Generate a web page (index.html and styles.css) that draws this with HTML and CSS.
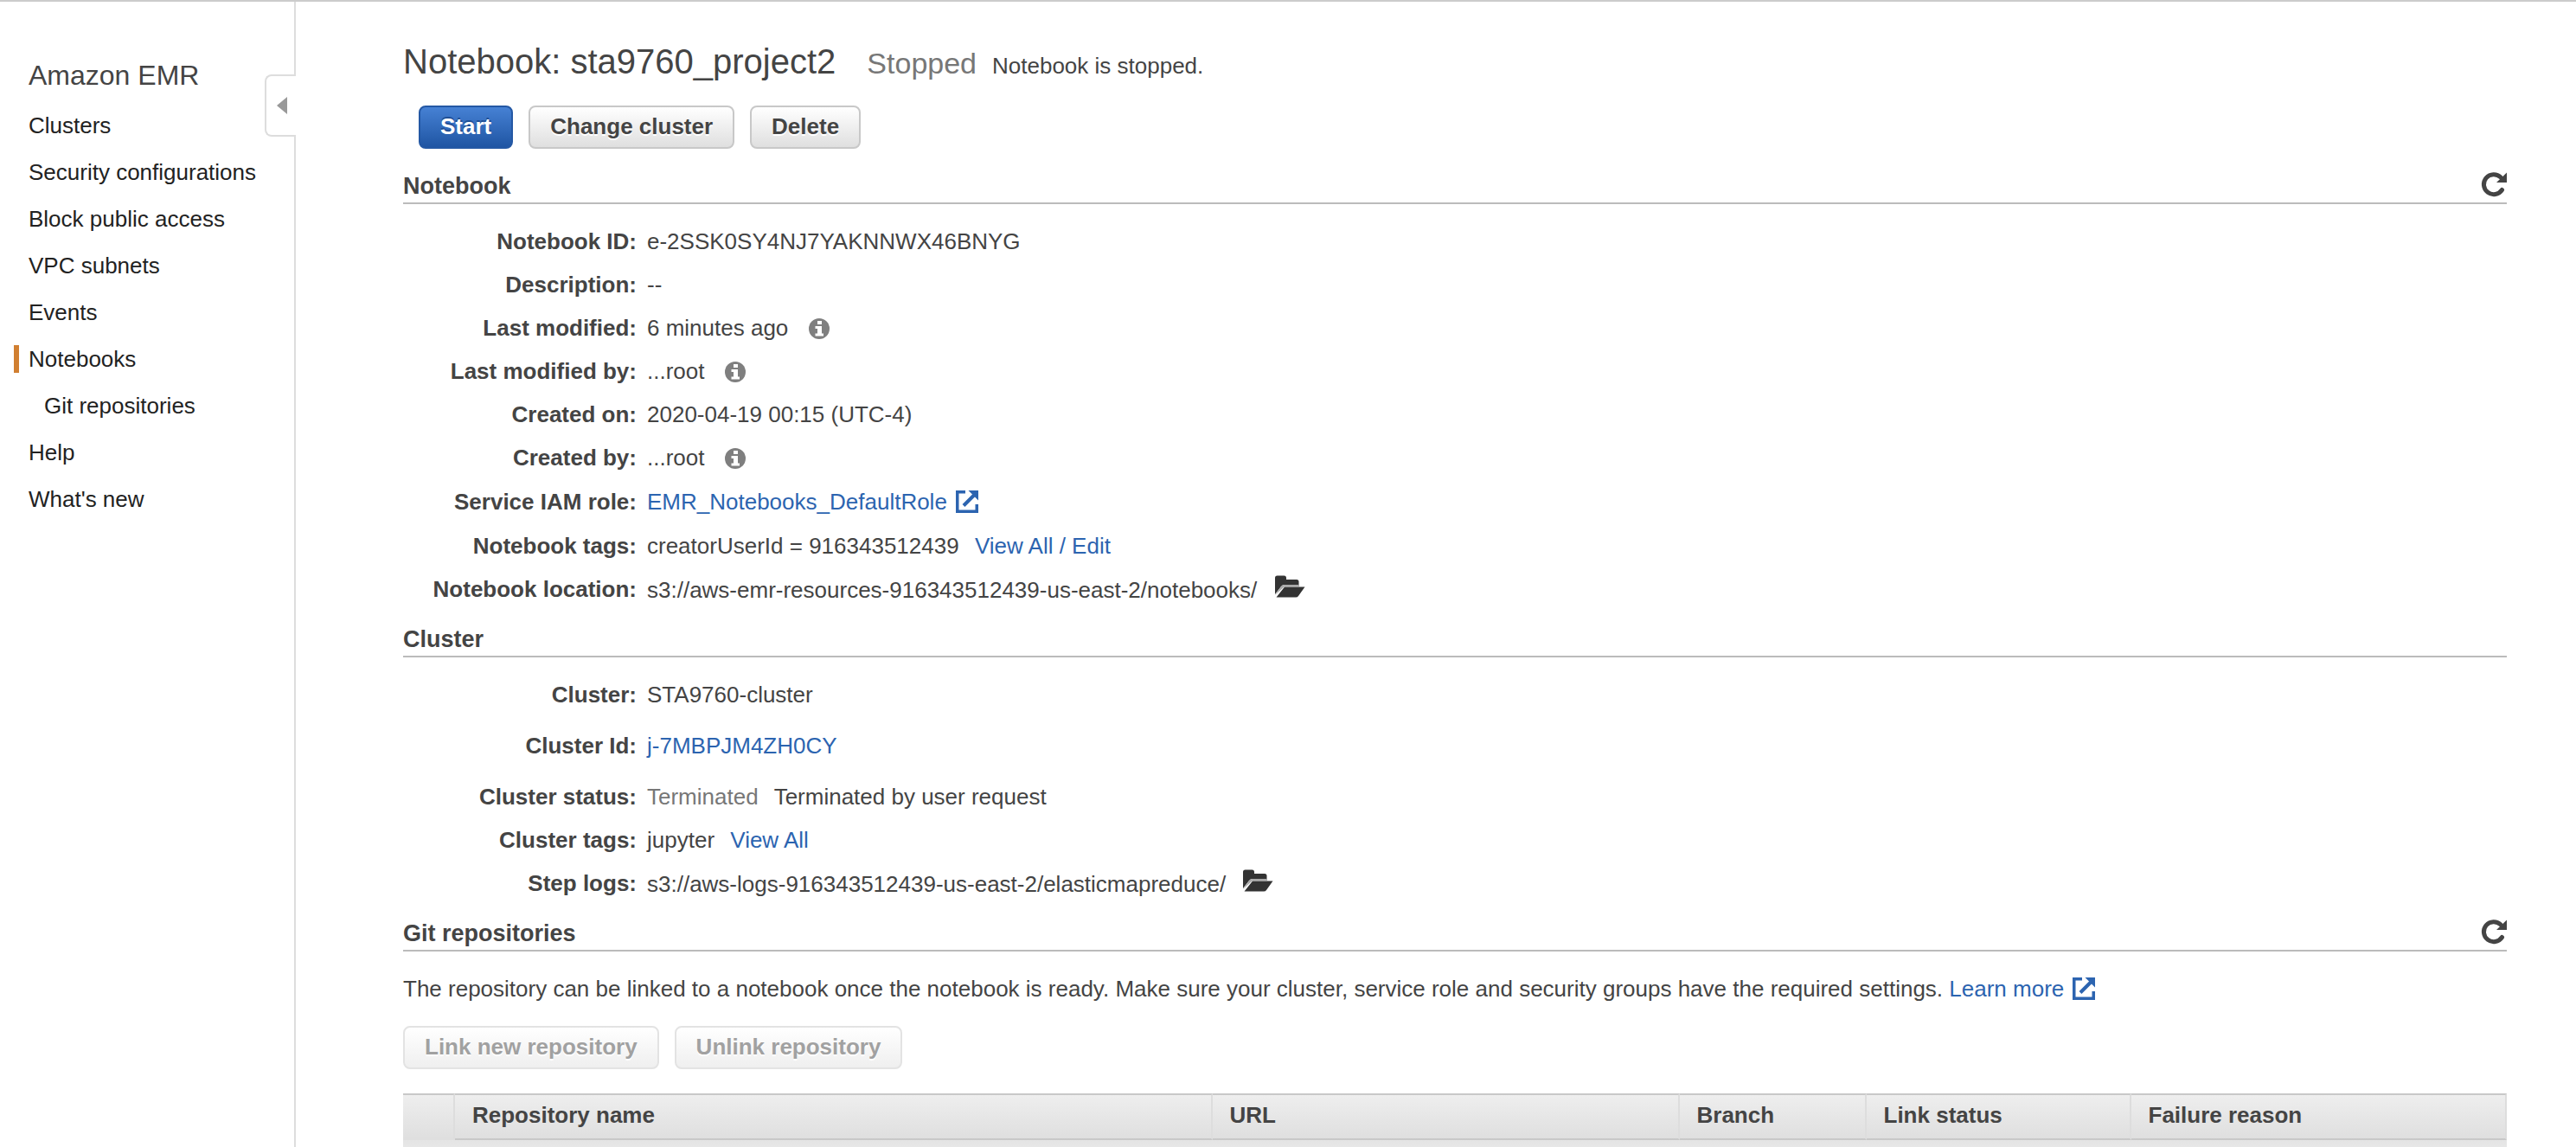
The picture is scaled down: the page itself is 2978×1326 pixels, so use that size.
FILE: index.html
```html
<!DOCTYPE html>
<html lang="en">
<head>
<meta charset="utf-8">
<title>Amazon EMR – Notebook: sta9760_project2</title>
<link rel="stylesheet" href="styles.css">
</head>
<body>
<svg class="sprite" aria-hidden="true">
  <symbol id="i-info" viewBox="0 0 24 24">
    <circle cx="12" cy="12" r="12" fill="#7f7f7f"/>
    <path fill="#fff" d="M10 3h5v4h-5zM7.500 9H15v8.500h2v3H7.500v-3H10V12H7.500z"/>
  </symbol>
  <symbol id="i-external" viewBox="0 0 26 26">
    <path fill="none" stroke="#2c64b0" stroke-width="3.500" d="M11 1.750H1.750v22.500h22.500V16"/>
    <path fill="none" stroke="#2c64b0" stroke-width="4" d="M9 17.500L21 5.500"/>
    <path fill="#2c64b0" d="M14.500 0H26v11.500z"/>
  </symbol>
  <symbol id="i-folder" viewBox="0 0 36 26">
    <path fill="#333" d="M1 22V3q0-2.500 2.500-2.500h8q2.500 0 2.500 2.500v2h12q2.500 0 2.500 2.500V11H12q-2.500 0-4 2z"/>
    <path fill="#aaa" d="M1 23l7-10q1.500-2 4-2h17v2H12z"/>
    <path fill="#333" d="M12 13.500h23.500L28 24q-1 1.500-3 1.500H2.500z"/>
  </symbol>
  <symbol id="i-refresh" viewBox="0 0 30 30">
    <path fill="none" stroke="#444" stroke-width="5" stroke-linecap="round" d="M24.500 21.500A11.500 11.500 0 1 1 23 7"/>
    <path fill="#444" d="M18 13L30 1.500V13z"/>
  </symbol>
</svg>
<div class="shell">
  <aside class="sidebar">
    <h2 class="service">Amazon EMR</h2>
    <nav>
      <ul class="nav">
        <li><a href="#">Clusters</a></li>
        <li><a href="#">Security configurations</a></li>
        <li><a href="#">Block public access</a></li>
        <li><a href="#">VPC subnets</a></li>
        <li><a href="#">Events</a></li>
        <li><a href="#" class="current">Notebooks</a></li>
        <li><a href="#" class="nested">Git repositories</a></li>
        <li><a href="#">Help</a></li>
        <li><a href="#">What's new</a></li>
      </ul>
    </nav>
    <button class="collapse" aria-label="Collapse navigation"><svg viewBox="0 0 12 20"><path fill="#999" d="M12 0v20L0 10z"/></svg></button>
  </aside>
  <main class="main">
    <header class="title">
      <h1>Notebook: sta9760_project2</h1>
      <span class="state">Stopped</span>
      <span>Notebook is stopped.</span>
    </header>
    <div class="actions">
      <button class="btn primary">Start</button>
      <button class="btn">Change cluster</button>
      <button class="btn">Delete</button>
    </div>

    <section>
      <div class="section-head"><h2>Notebook</h2><button class="refresh" aria-label="Refresh notebook"><svg><use href="#i-refresh"/></svg></button></div>
      <dl class="facts">
        <dt>Notebook ID:</dt><dd>e-2SSK0SY4NJ7YAKNNWX46BNYG</dd>
        <dt>Description:</dt><dd>--</dd>
        <dt>Last modified:</dt><dd>6 minutes ago <svg class="info"><use href="#i-info"/></svg></dd>
        <dt>Last modified by:</dt><dd>...root <svg class="info"><use href="#i-info"/></svg></dd>
        <dt>Created on:</dt><dd>2020-04-19 00:15 (UTC-4)</dd>
        <dt>Created by:</dt><dd>...root <svg class="info"><use href="#i-info"/></svg></dd>
        <dt class="roomy">Service IAM role:</dt><dd class="roomy"><a href="#">EMR_Notebooks_DefaultRole<svg class="external"><use href="#i-external"/></svg></a></dd>
        <dt>Notebook tags:</dt><dd>creatorUserId = 916343512439 <a href="#" class="more">View All / Edit</a></dd>
        <dt>Notebook location:</dt><dd>s3://aws-emr-resources-916343512439-us-east-2/notebooks/ <svg class="folder"><use href="#i-folder"/></svg></dd>
      </dl>
    </section>

    <section>
      <div class="section-head"><h2>Cluster</h2></div>
      <dl class="facts">
        <dt>Cluster:</dt><dd>STA9760-cluster</dd>
        <dt class="tall">Cluster Id:</dt><dd class="tall"><a href="#">j-7MBPJM4ZH0CY</a></dd>
        <dt>Cluster status:</dt><dd><span class="muted">Terminated</span><span class="reason">Terminated by user request</span></dd>
        <dt>Cluster tags:</dt><dd>jupyter <a href="#" class="more">View All</a></dd>
        <dt>Step logs:</dt><dd>s3://aws-logs-916343512439-us-east-2/elasticmapreduce/ <svg class="folder"><use href="#i-folder"/></svg></dd>
      </dl>
    </section>

    <section>
      <div class="section-head"><h2>Git repositories</h2><button class="refresh" aria-label="Refresh repositories"><svg><use href="#i-refresh"/></svg></button></div>
      <p class="hint">The repository can be linked to a notebook once the notebook is ready. Make sure your cluster, service role and security groups have the required settings. <a href="#">Learn more<svg class="external"><use href="#i-external"/></svg></a></p>
      <div class="repo-actions">
        <button class="btn" disabled>Link new repository</button>
        <button class="btn" disabled>Unlink repository</button>
      </div>
      <table class="repos">
        <colgroup><col class="c-pick"><col class="c-name"><col class="c-url"><col class="c-branch"><col class="c-link"><col></colgroup>
        <thead><tr><th></th><th>Repository name</th><th>URL</th><th>Branch</th><th>Link status</th><th>Failure reason</th></tr></thead>
        <tbody><tr><td colspan="6"></td></tr></tbody>
      </table>
    </section>
  </main>
</div>
</body>
</html>
```

FILE: styles.css
```css
* { box-sizing: border-box; }

html, body { height: 100%; }

body {
  margin: 0;
  overflow: hidden;
  background: #fff;
  color: #444;
  font: 26px/30px "Liberation Sans", Arial, sans-serif;
}

h1, h2, p, dl, dd, ul { margin: 0; padding: 0; }
a { color: #2c64b0; text-decoration: none; }
button { font: inherit; color: inherit; cursor: pointer; }
.sprite { display: none; }

.shell {
  display: flex;
  min-height: 100%;
  border-top: 2px solid #ccc;
}

/* navigation */
.sidebar {
  position: relative;
  flex: 0 0 342px;
  padding-top: 64px;
  border-right: 2px solid #ddd;
}
.service {
  padding-left: 33px;
  font-size: 32px;
  line-height: 42px;
  font-weight: 400;
}
.nav { padding-top: 21px; list-style: none; }
.nav li { padding: 0 0 22px 16px; }
.nav a {
  display: block;
  padding-left: 11px;
  border-left: 6px solid transparent;
  color: #222;
  line-height: 32px;
}
.nav .current { border-color: #d17f31; }
.nav .nested { padding-left: 29px; }
.collapse {
  position: absolute;
  top: 84px;
  right: -2px;
  display: flex;
  align-items: center;
  width: 36px;
  height: 72px;
  padding: 0 0 0 12px;
  border: 2px solid #ddd;
  border-right: 0;
  border-radius: 8px 0 0 8px;
  background: #fff;
}
.collapse svg { width: 12px; height: 20px; }

/* content */
.main {
  flex: 1;
  min-width: 0;
  padding: 44px 80px 0 124px;
}
.title { display: flex; align-items: baseline; }
.title h1 { font-size: 40px; line-height: 50px; font-weight: 400; }
.state { margin: 0 18px 0 36px; color: #777; font-size: 34px; }

.actions, .repo-actions { display: flex; gap: 18px; }
.actions { padding: 26px 0 26px 18px; }
.btn {
  height: 50px;
  padding: 0 23px 3px;
  border: 2px solid #c8c8c8;
  border-radius: 8px;
  background: linear-gradient(#fff, #dfdfdf);
  color: #444;
  font-weight: 700;
  text-shadow: 0 2px 0 #fff;
}
.btn.primary {
  border-color: #2458a4;
  background: linear-gradient(#4681d4, #1f55a3);
  color: #fff;
  text-shadow: 0 -2px 0 #1f4f96;
}
.btn:disabled { border-color: #e3e3e3; background: linear-gradient(#fff, #efefef); color: #a1a1a1; cursor: default; }

.section-head {
  display: flex;
  justify-content: space-between;
  align-items: flex-start;
  height: 38px;
  border-bottom: 2px solid #bbb;
}
.section-head h2 { font-size: 27px; line-height: 34px; }
.refresh { height: 30px; padding: 0; border: 0; background: none; }
.refresh svg { display: block; width: 30px; height: 30px; }

.facts {
  display: grid;
  grid-template-columns: 270px 1fr;
  column-gap: 12px;
  grid-auto-rows: minmax(50px, auto);
  align-items: center;
  padding: 18px 0 16px;
}
.facts dt { font-weight: 700; text-align: right; }
.facts .roomy { line-height: 52px; }
.facts .tall { line-height: 68px; }
.info { width: 24px; height: 24px; margin-left: 16px; vertical-align: -4px; }
.external { width: 26px; height: 26px; margin-left: 10px; vertical-align: -4px; }
.folder { width: 36px; height: 26px; margin-left: 12px; vertical-align: baseline; }
.more { margin-left: 11px; }
.muted { color: #777; }
.reason { margin-left: 18px; }

.hint { padding: 28px 0; }
.repo-actions { padding-bottom: 28px; }

.repos {
  width: 100%;
  border-collapse: separate;
  border-spacing: 0;
  table-layout: fixed;
}
.c-pick { width: 60px; }
.c-name { width: 36%; }
.c-url { width: 540px; }
.c-branch { width: 216px; }
.c-link { width: 306px; }
.repos th {
  height: 54px;
  padding: 0 18px 4px 20px;
  border-top: 2px solid #c8c8c8;
  border-bottom: 2px solid #c8c8c8;
  border-right: 2px solid #ddd;
  background: linear-gradient(#eee, #dfdfdf);
  text-align: left;
}
.repos th:first-child { border-bottom-color: #dfdfdf; }
.repos td { height: 40px; padding: 0; background: linear-gradient(#e4e4e4, #f4f4f4); }
```
